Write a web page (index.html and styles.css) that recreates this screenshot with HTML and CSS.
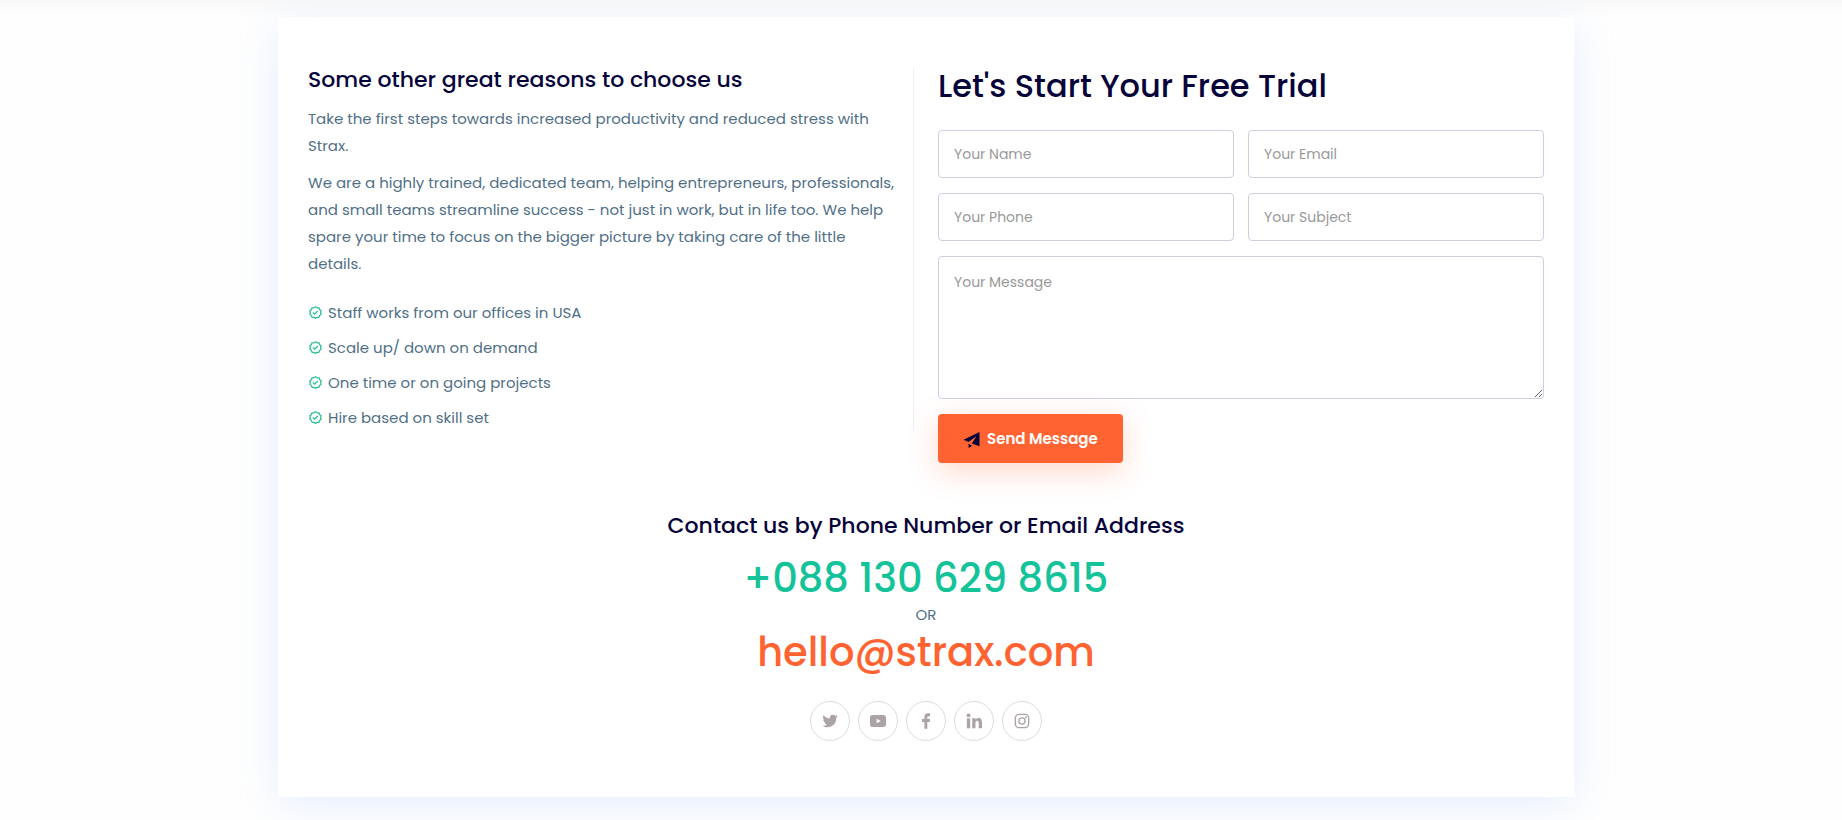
FILE: index.html
```html
<!DOCTYPE html>
<html lang="en">
<head>
<meta charset="utf-8">
<meta name="viewport" content="width=device-width, initial-scale=1">
<title>Strax - Free Trial</title>
<link rel="stylesheet" href="styles.css">
</head>
<body>
<main class="page">
  <section class="card">
    <div class="columns">
      <div class="reasons">
        <h3 class="subtitle">Some other great reasons to choose us</h3>
        <p class="text">Take the first steps towards increased productivity and reduced stress with Strax.</p>
        <p class="text">We are a highly trained, dedicated team, helping entrepreneurs, professionals, and small teams streamline success - not just in work, but in life too. We help spare your time to focus on the bigger picture by taking care of the little details.</p>
        <svg width="0" height="0" class="defs" aria-hidden="true">
          <symbol id="badge" viewBox="0 0 24 24"><path fill="none" stroke="currentColor" stroke-width="2" stroke-linejoin="round" d="M12 2.6l2.5 1.9 3.1-.1.9 3 2.6 1.8-1 2.8 1 2.9-2.6 1.8-.9 3-3.1-.1L12 21.400l-2.500-1.800-3.100.1-.9-3-2.600-1.800 1-2.900-1-2.800 2.600-1.800.9-3 3.100.1z"/><path fill="none" stroke="currentColor" stroke-width="2" d="M7.800 12l2.700 2.700 5.200-5.200"/></symbol>
        </svg>
        <ul class="list">
          <li class="item"><svg class="badge"><use href="#badge"/></svg>Staff works from our offices in USA</li>
          <li class="item"><svg class="badge"><use href="#badge"/></svg>Scale up/ down on demand</li>
          <li class="item"><svg class="badge"><use href="#badge"/></svg>One time or on going projects</li>
          <li class="item"><svg class="badge"><use href="#badge"/></svg>Hire based on skill set</li>
        </ul>
      </div>
      <form class="trial">
        <h2 class="title">Let's Start Your Free Trial</h2>
        <div class="fields">
          <input class="field" type="text" placeholder="Your Name" aria-label="Your Name">
          <input class="field" type="email" placeholder="Your Email" aria-label="Your Email">
          <input class="field" type="tel" placeholder="Your Phone" aria-label="Your Phone">
          <input class="field" type="text" placeholder="Your Subject" aria-label="Your Subject">
          <textarea class="field message" placeholder="Your Message" aria-label="Your Message"></textarea>
        </div>
        <button class="send" type="button"><svg class="plane" viewBox="0 0 16 16" aria-hidden="true"><path fill="currentColor" d="M16 0v14.200l-7.600-2.700L12.800 4.200 5 10.100 0 7.800zM5 11.700l3.600 2L5.200 16z"/></svg>Send Message</button>
      </form>
    </div>
    <div class="contact">
      <h3 class="subtitle">Contact us by Phone Number or Email Address</h3>
      <a class="link phone" href="tel:+0881306298615">+088 130 629 8615</a>
      <span class="or">OR</span>
      <a class="link email" href="mailto:hello@strax.com">hello@strax.com</a>
      <div class="social">
        <a class="round" href="#" aria-label="Twitter"><svg viewBox="0 0 24 24"><path d="M23.6 4.8c-.8.4-1.700.6-2.700.8.9-.6 1.700-1.500 2-2.600-.9.5-1.900.9-3 1.100a4.700 4.700 0 0 0-8 4.300C8 8.200 4.500 6.300 2.200 3.500a4.700 4.700 0 0 0 1.500 6.300c-.8 0-1.500-.2-2.100-.6v.1c0 2.300 1.600 4.200 3.800 4.600-.7.2-1.400.2-2.100.1.600 1.900 2.300 3.200 4.400 3.300A9.500 9.500 0 0 1 .7 19.200 13.400 13.400 0 0 0 21.300 7.300c.9-.7 1.700-1.500 2.300-2.500z"/></svg></a>
        <a class="round" href="#" aria-label="YouTube"><svg viewBox="0 0 24 24"><path fill-rule="evenodd" d="M4 3h16q4 0 4 4v10q0 4-4 4H4q-4 0-4-4V7q0-4 4-4zm6 5.500v7l6-3.500z"/></svg></a>
        <a class="round" href="#" aria-label="Facebook"><svg viewBox="0 0 24 24"><path d="M14 23.500V13.500h3.700l.5-4.500H14V6.600c0-1.200.4-1.900 2-1.900h2.200V.7c-.4 0-1.700-.2-3.200-.2-3.300 0-5.400 2-5.400 5.500v3H6v4.500h3.600v10z"/></svg></a>
        <a class="round" href="#" aria-label="LinkedIn"><svg viewBox="0 0 24 24"><path d="M1.300 8h5v15h-5z"/><circle cx="3.800" cy="3.500" r="2.900"/><path d="M9.300 8h4.800v2.100c.7-1.300 2.300-2.500 4.600-2.500 4.500 0 5.300 3 5.300 7V23h-5v-7.500c0-1.800-.1-4-2.300-4s-2.500 1.900-2.500 3.900V23H9.300z"/></svg></a>
        <a class="round" href="#" aria-label="Instagram"><svg viewBox="0 0 24 24"><rect class="line" x="2" y="2" width="20" height="20" rx="5.500"/><circle class="line" cx="12" cy="12" r="4.600"/><circle cx="17.800" cy="6.200" r="1.500"/></svg></a>
      </div>
    </div>
  </section>
</main>
</body>
</html>
```

FILE: styles.css
```css
* { box-sizing: border-box; }

body {
  margin: 0;
  background: #fefefe;
  color: #506f87;
  font-family: Poppins, Inter, sans-serif;
  font-size: 15px;
  line-height: 27px;
}

.page {
  max-width: 1330px;
  margin: 0 auto;
  padding: 17px 12px 23px 22px;
}

body::before {
  content: "";
  position: absolute;
  inset: 0 0 auto;
  height: 17px;
  background: linear-gradient(rgba(0, 0, 0, 0.025), rgba(0, 0, 0, 0));
}

.card {
  padding: 50px 30px 56px;
  background: #fff;
  box-shadow: 0 8px 40px rgba(137, 173, 255, 0.2);
}

.columns {
  display: grid;
  grid-template-columns: 1fr 1fr;
  align-items: start;
  gap: 24px;
}

.reasons {
  border-right: 1px solid #eee;
  padding-right: 16px;
}

.subtitle {
  margin: 0 0 12px;
  color: #06033a;
  font-size: 22px;
  font-weight: 500;
  line-height: 26px;
}

.text { margin: 0 0 10px; }
.defs { display: block; }

.list {
  display: grid;
  gap: 8px;
  margin: 12px 0 0;
  padding: 0;
  list-style: none;
}

.item {
  display: flex;
  align-items: center;
  gap: 5px;
}

.badge {
  width: 15px;
  height: 15px;
  color: #2fbf98;
}

.title {
  margin: 0 0 25px;
  color: #06033a;
  font-size: 32px;
  font-weight: 500;
  line-height: 38px;
}

.fields {
  display: grid;
  grid-template-columns: 1fr 1fr;
  gap: 15px 14px;
}

.field {
  width: 100%;
  height: 48px;
  padding: 10px 15px;
  border: 1px solid #cfcde0;
  border-radius: 4px;
  background: #fff;
  color: #06033a;
  font: inherit;
  font-size: 14px;
}

.field::placeholder { color: #999; }

.message {
  display: block;
  grid-column: 1 / -1;
  height: 143px;
  padding: 12px 15px;
  resize: vertical;
}

.send {
  display: inline-flex;
  align-items: center;
  gap: 7px;
  height: 49px;
  margin-top: 15px;
  padding: 0 25px;
  border: 0;
  border-radius: 4px;
  background: #ff6331;
  box-shadow: 0 8px 30px rgba(255, 99, 49, 0.25);
  color: #fff;
  font: inherit;
  font-weight: 600;
}

.plane {
  width: 17px;
  height: 16px;
  margin-top: 3px;
  color: #06033a;
}

.contact {
  display: flex;
  flex-direction: column;
  align-items: center;
  padding-top: 50px;
}

.contact .subtitle { margin-bottom: 15px; }

.link {
  font-size: 40px;
  font-weight: 500;
  line-height: 48px;
  text-decoration: none;
}

.phone { color: #15c39a; }
.email { color: #ff6331; }
.or { line-height: 26px; }

.social {
  display: flex;
  gap: 8px;
  margin-top: 25px;
}

.round {
  display: grid;
  place-items: center;
  width: 40px;
  height: 40px;
  border: 1px solid #ddd;
  border-radius: 50%;
}

.round svg {
  width: 16px;
  height: 16px;
  fill: #aca4a4;
}

.round .line {
  fill: none;
  stroke: #aca4a4;
  stroke-width: 2;
}
```
